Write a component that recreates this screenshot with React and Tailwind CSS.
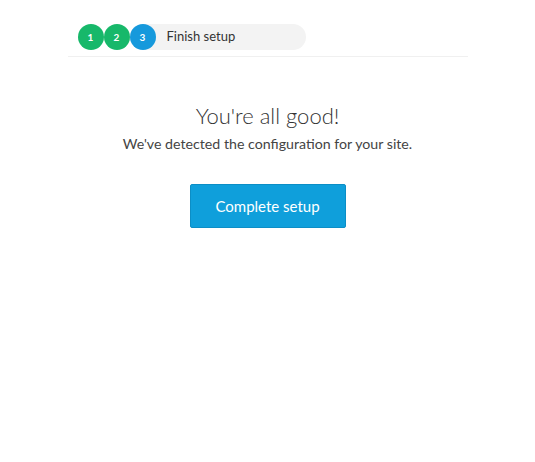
export default function App() {
  return (
    <div className="min-h-[462px] bg-white font-['Lato','Noto_Sans',sans-serif] text-[#333]">
      <div className="mx-auto w-[400px]">
        <div className="flex h-[57px] items-start border-b border-[#f0f0f0] pt-6 pl-[10px]">
          <div className="flex items-center">
            <span className="z-10 flex h-[26px] w-[26px] items-center justify-center rounded-full bg-[#17b86a] text-[10px] font-bold text-white">1</span>
            <span className="z-10 flex h-[26px] w-[26px] items-center justify-center rounded-full bg-[#17b86a] text-[10px] font-bold text-white">2</span>
            <div className="flex h-[26px] w-[176px] items-center rounded-full bg-[#f3f3f3]">
              <span className="flex h-[26px] w-[26px] items-center justify-center rounded-full bg-[#1699dc] text-[10px] font-bold text-white">3</span>
              <span className="ml-[11px] text-[13px] text-[#333]">Finish setup</span>
            </div>
          </div>
        </div>
        <div className="flex flex-col items-center pt-[45px]">
          <h1 className="text-[22px] font-light leading-[28px] text-[#333]">You're all good!</h1>
          <p className="mt-[5px] text-[14.2px] leading-[18px] text-[#444]">We've detected the configuration for your site.</p>
          <button className="mt-[31px] h-[44px] w-[156px] rounded-[2px] border border-[#0c8ec6] bg-[#0f9fdb] text-[15px] text-white">
            Complete setup
          </button>
        </div>
      </div>
    </div>
  )
}
